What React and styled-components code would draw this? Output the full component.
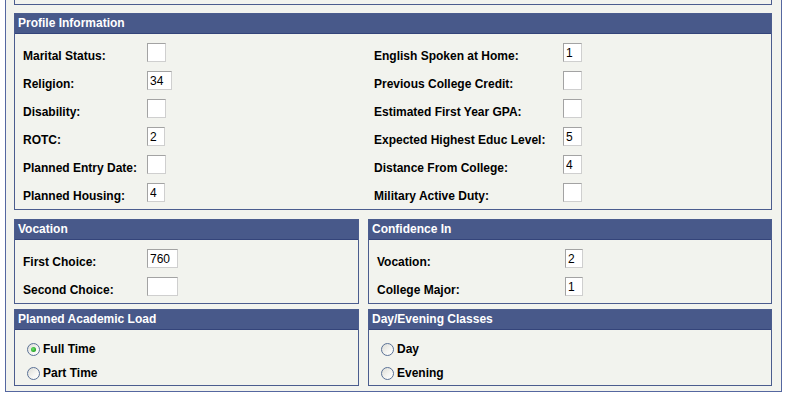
import React from "react";
import styled, { createGlobalStyle } from "styled-components";

const GlobalStyle = createGlobalStyle`
  html, body {
    margin: 0;
    padding: 0;
    background: #ffffff;
  }
  body {
    font-family: "Liberation Sans", Arial, sans-serif;
    font-size: 12px;
    color: #000;
  }
`;

const Frame = styled.div`
  box-sizing: border-box;
  width: 777px;
  margin-left: 5px;
  padding: 0 9px 5px 8px;
  background: #f2f3ee;
  border: 1px solid #5567a0;
  border-top: none;
`;

const Stub = styled.div`
  box-sizing: border-box;
  width: 758px;
  height: 5px;
  border: 1px solid #4b5c8e;
  border-top: none;
`;

const Panel = styled.div`
  box-sizing: border-box;
  width: ${({ $w }) => $w}px;
  margin-top: ${({ $mt }) => $mt || 0}px;
  border: 1px solid #4b5c8e;
  background: #f2f3ee;
`;

const Header = styled.div`
  box-sizing: border-box;
  height: 20px;
  line-height: 19px;
  padding-left: 3px;
  background: #48598a;
  border-bottom: 1px solid #34447a;
  color: #ffffff;
  font-weight: bold;
  font-size: 12px;
  white-space: nowrap;
`;

const FieldBody = styled.div`
  display: grid;
  grid-template-columns: ${({ $cols }) => $cols};
  row-gap: 9px;
  padding: 9px 0 7px 8px;
`;

const Field = styled.div`
  display: flex;
  align-items: flex-start;
  height: 19px;
`;

const Label = styled.span`
  box-sizing: border-box;
  width: ${({ $w }) => $w}px;
  padding-top: 6px;
  line-height: 14px;
  font-weight: bold;
  white-space: nowrap;
`;

const Input = styled.input`
  box-sizing: border-box;
  width: ${({ $w }) => $w}px;
  height: 19px;
  margin: 0;
  padding: 0 0 0 2px;
  background: #ffffff;
  border: 1px solid #a3a3a3;
  border-right-color: #cfcfcf;
  border-bottom-color: #cfcfcf;
  font-family: "Liberation Sans", Arial, sans-serif;
  font-size: 12px;
  color: #000;
  outline: none;
`;

const BottomGrid = styled.div`
  display: grid;
  grid-template-columns: 345px 404px;
  column-gap: 9px;
  row-gap: 5px;
  margin-top: 9px;
`;

const RadioBody = styled.div`
  padding: 7px 0 0 12px;
`;

const RadioRow = styled.label`
  display: flex;
  align-items: center;
  height: 24px;
  font-weight: bold;
  gap: 3px;
`;

const RadioDot = styled.span`
  box-sizing: border-box;
  position: relative;
  width: 13px;
  height: 13px;
  border-radius: 50%;
  border: 1px solid #5a7196;
  background: linear-gradient(135deg, #dcdcd6 0%, #f6f6f3 60%, #ffffff 100%);
  flex: none;
  &::after {
    content: "";
    display: ${({ $checked }) => ($checked ? "block" : "none")};
    position: absolute;
    left: 3px;
    top: 3px;
    width: 5px;
    height: 5px;
    border-radius: 50%;
    background: radial-gradient(circle at 40% 40%, #6ee36e 0%, #21a121 70%);
  }
`;

const leftProfile = [
  ["Marital Status:", "", 19],
  ["Religion:", "34", 25],
  ["Disability:", "", 19],
  ["ROTC:", "2", 18],
  ["Planned Entry Date:", "", 19],
  ["Planned Housing:", "4", 18],
];

const rightProfile = [
  ["English Spoken at Home:", "1", 19],
  ["Previous College Credit:", "", 19],
  ["Estimated First Year GPA:", "", 19],
  ["Expected Highest Educ Level:", "5", 19],
  ["Distance From College:", "4", 19],
  ["Military Active Duty:", "", 19],
];

const FieldItem = ({ label, value, w, lw }) => (
  <Field>
    <Label $w={lw}>{label}</Label>
    <Input $w={w} defaultValue={value} readOnly />
  </Field>
);

const Radio = ({ label, checked }) => (
  <RadioRow>
    <RadioDot $checked={checked} />
    {label}
  </RadioRow>
);

export default function App() {
  return (
    <>
      <GlobalStyle />
      <Frame>
        <Stub />
        <Panel $w={758} $mt={8}>
          <Header>Profile Information</Header>
          <FieldBody $cols="351px 1fr">
            {leftProfile.map(([label, value, w], i) => (
              <React.Fragment key={label}>
                <FieldItem label={label} value={value} w={w} lw={124} />
                <FieldItem
                  label={rightProfile[i][0]}
                  value={rightProfile[i][1]}
                  w={rightProfile[i][2]}
                  lw={189}
                />
              </React.Fragment>
            ))}
          </FieldBody>
        </Panel>
        <BottomGrid>
          <Panel $w={345}>
            <Header>Vocation</Header>
            <FieldBody $cols="1fr">
              <FieldItem label="First Choice:" value="760" w={31} lw={124} />
              <FieldItem label="Second Choice:" value="" w={31} lw={124} />
            </FieldBody>
          </Panel>
          <Panel $w={404}>
            <Header>Confidence In</Header>
            <FieldBody $cols="1fr">
              <FieldItem label="Vocation:" value="2" w={18} lw={188} />
              <FieldItem label="College Major:" value="1" w={18} lw={188} />
            </FieldBody>
          </Panel>
          <Panel $w={345}>
            <Header>Planned Academic Load</Header>
            <RadioBody>
              <Radio label="Full Time" checked />
              <Radio label="Part Time" />
            </RadioBody>
          </Panel>
          <Panel $w={404}>
            <Header>Day/Evening Classes</Header>
            <RadioBody>
              <Radio label="Day" />
              <Radio label="Evening" />
            </RadioBody>
          </Panel>
        </BottomGrid>
      </Frame>
    </>
  );
}
